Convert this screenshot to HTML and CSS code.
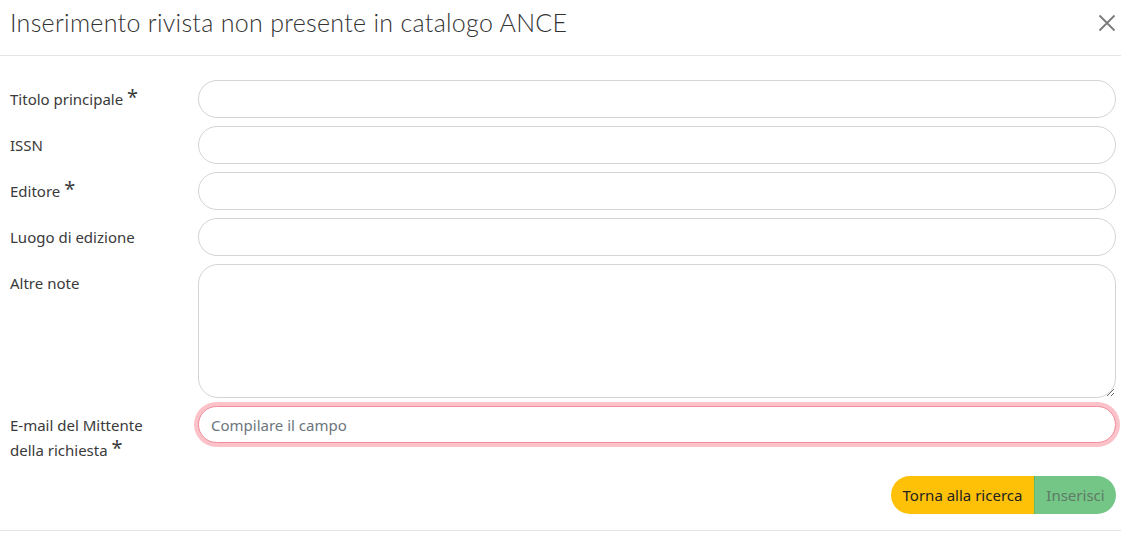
FILE: index.html
```html
<!DOCTYPE html>
<html lang="it">
<head>
<meta charset="utf-8">
<link rel="stylesheet" href="styles.css">
</head>
<body>
<div class="modal">
  <div class="modal-header">
    <h1 class="modal-title">Inserimento rivista non presente in catalogo ANCE</h1>
    <button class="close" type="button" aria-label="Chiudi">
      <svg width="18" height="18" viewBox="0 0 18 18"><path d="M1.5 1.5 L16.5 16.5 M16.5 1.5 L1.5 16.5" stroke="#7a7a7a" stroke-width="1.8" fill="none"/></svg>
    </button>
  </div>
  <form class="modal-body">
    <div class="row">
      <label class="lbl">Titolo principale <span class="req">*</span></label>
      <input class="field" type="text">
    </div>
    <div class="row">
      <label class="lbl">ISSN</label>
      <input class="field" type="text">
    </div>
    <div class="row">
      <label class="lbl">Editore <span class="req">*</span></label>
      <input class="field" type="text">
    </div>
    <div class="row">
      <label class="lbl">Luogo di edizione</label>
      <input class="field" type="text">
    </div>
    <div class="row">
      <label class="lbl">Altre note</label>
      <textarea class="field area"></textarea>
    </div>
    <div class="row row-email">
      <label class="lbl">E-mail del Mittente<br>della richiesta <span class="req">*</span></label>
      <input class="field invalid" type="text" placeholder="Compilare il campo" autofocus>
    </div>
    <div class="actions">
      <button class="btn btn-back" type="button">Torna alla ricerca</button><button class="btn btn-ins" type="button">Inserisci</button>
    </div>
  </form>
</div>
</body>
</html>
```
FILE: styles.css
```css
* { box-sizing: border-box; }
html, body { margin: 0; padding: 0; background: #fff; }
body { font-family: "Noto Sans", "Open Sans", sans-serif; color: #333; }
.modal { width: 1121px; height: 533px; }
.modal-header {
  display: flex;
  align-items: center;
  justify-content: space-between;
  height: 56px;
  padding: 0 5px 12px 10px;
  border-bottom: 1px solid #e4e4e4;
}
.modal-title {
  margin: 0;
  font-family: "Lato", sans-serif;
  font-weight: 300;
  font-size: 25px;
  color: #333;
  letter-spacing: 0.3px;
}
.close {
  border: 0;
  background: none;
  padding: 0;
  width: 18px;
  height: 18px;
  display: flex;
  margin-top: 2px;
}
.modal-body {
  display: flex;
  flex-direction: column;
  padding: 24px 5px 0 10px;
  height: 475px;
  border-bottom: 1px solid #e4e4e4;
}
.row {
  display: flex;
  align-items: flex-start;
  margin-bottom: 8px;
}
.lbl {
  width: 188px;
  flex: none;
  font-size: 15px;
  line-height: 24px;
  padding-top: 7px;
  color: #3a3a3a;
}
.req { font-size: 20px; line-height: 10px; position: relative; top: -1px; }
.field {
  flex: 1;
  height: 38px;
  border: 1px solid #d4d4d8;
  border-radius: 19px;
  background: #fff;
  font-family: inherit;
  font-size: 15px;
  padding: 0 12px;
  outline: none;
}
.area { height: 134px; border-radius: 20px; resize: vertical; }
.row-email { margin-top: -1px; }
.row-email .lbl { padding-top: 8px; line-height: 25px; }
.invalid {
  border-color: #f08c9b;
  box-shadow: 0 0 0 4px #fbc2ca;
  height: 37px;
  margin-top: 1px;
  color: #333;
}
.invalid::placeholder { color: #6c757d; }
.actions {
  display: flex;
  justify-content: flex-end;
  margin-top: 5px;
}
.btn {
  height: 38px;
  border: 0;
  font-family: inherit;
  font-size: 15px;
  padding: 0;
}
.btn-back {
  background: #ffc107;
  color: #222;
  border-radius: 19px 0 0 19px;
  width: 143px;
}
.btn-ins {
  background: #74c687;
  color: #5f7a66;
  border-left: 1px solid #5fb86e;
  border-radius: 0 19px 19px 0;
  width: 82px;
}
```
